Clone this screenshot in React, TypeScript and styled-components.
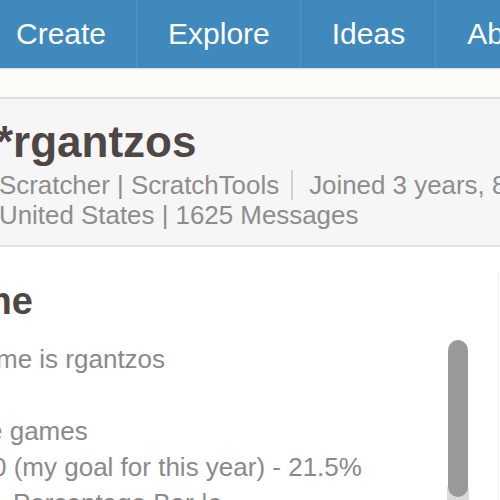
import React from 'react'
import styled, { createGlobalStyle } from 'styled-components'

const GlobalStyle = createGlobalStyle`
  html, body {
    margin: 0;
    padding: 0;
    background: #ffffff;
    overflow: hidden;
  }
  body {
    font-family: "Liberation Sans", Arial, Helvetica, sans-serif;
  }
`

const Page = styled.div`
  width: 500px;
  height: 500px;
  overflow: hidden;
  display: flex;
  flex-direction: column;
`

const Nav = styled.nav`
  display: flex;
  flex-shrink: 0;
  height: 68px;
  margin-left: -15px;
  background: #3f89bd;
  box-shadow: 0 1px 1px rgba(0, 0, 0, 0.12);
  position: relative;
  z-index: 1;
`

const NavItem = styled.a`
  display: flex;
  align-items: center;
  padding: 0 30px 0 31px;
  border-right: 1px solid #4c96c9;
  color: #ffffff;
  font-size: 30px;
  line-height: 68px;
  white-space: nowrap;
  text-decoration: none;
`

const Strip = styled.div`
  flex-shrink: 0;
  height: 29px;
  background: #fcfbf7;
  border-bottom: 2px solid #dedede;
`

const ProfileBox = styled.header`
  flex-shrink: 0;
  padding: 19px 0 15px;
  background: #f6f6f6;
  border-bottom: 2px solid #e1e1e1;
  white-space: nowrap;
`

const Name = styled.h1`
  margin: 0 0 0 -4px;
  font-size: 44px;
  line-height: 48px;
  font-weight: 700;
  color: #4f4646;
`

const Meta = styled.div`
  margin: 4px 0 0 -1px;
  font-size: 25.9px;
  line-height: 30px;
  color: #8d8d8d;
`

const MetaLine = styled.div`
  display: flex;
  align-items: flex-start;
`

const MetaGroup = styled.span<{ $divided?: boolean }>`
  display: inline-block;
  ${({ $divided }) =>
    $divided &&
    `
    margin-left: 12px;
    padding-left: 16px;
    border-left: 2px solid #d2d2d2;
  `}
`

const Section = styled.section`
  flex: 1;
  position: relative;
  margin-top: 26px;
  padding-top: 6px;
  width: 498px;
  border-right: 1px solid #f0f0f0;
  white-space: nowrap;
  overflow: hidden;
`

const Heading = styled.h2<{ $shift: number }>`
  margin: 0 0 18px ${({ $shift }) => $shift}px;
  font-size: 38px;
  line-height: 44px;
  font-weight: 700;
  color: #4f4646;
`

const BodyLine = styled.div<{ $shift?: number }>`
  margin-left: ${({ $shift = 0 }) => $shift}px;
  min-height: 36px;
  font-size: 26px;
  line-height: 36px;
  color: #8a8a8a;
`

const Track = styled.div`
  position: absolute;
  left: 447px;
  top: 214px;
  width: 22px;
  height: 20px;
  background: #dadada;
`

const Thumb = styled.div`
  position: absolute;
  left: 448px;
  top: 67px;
  width: 20px;
  height: 157px;
  border-radius: 10px;
  background: #999999;
`

const navLinks = ['Create', 'Explore', 'Ideas', 'About']

const aboutLines: { text: string; shift: number }[] = [
  { text: 'me is rgantzos', shift: -4 },
  { text: '', shift: 0 },
  { text: 'e games', shift: -12 },
  { text: '0 (my goal for this year) - 21.5%', shift: -8 },
  { text: 'Percentage Bar |o', shift: 13 },
]

export default function App() {
  return (
    <>
      <GlobalStyle />
      <Page>
        <Nav>
          {navLinks.map(link => (
            <NavItem key={link}>{link}</NavItem>
          ))}
        </Nav>
        <Strip />
        <ProfileBox>
          <Name>*rgantzos</Name>
          <Meta>
            <MetaLine>
              <MetaGroup>Scratcher | ScratchTools</MetaGroup>
              <MetaGroup $divided>Joined 3 years, 8 months ago</MetaGroup>
            </MetaLine>
            <MetaLine>United States | 1625 Messages</MetaLine>
          </Meta>
        </ProfileBox>
        <Section>
          <Heading $shift={-22}>me</Heading>
          {aboutLines.map((line, i) => (
            <BodyLine key={i} $shift={line.shift}>
              {line.text}
            </BodyLine>
          ))}
          <Track />
          <Thumb />
        </Section>
      </Page>
    </>
  )
}
